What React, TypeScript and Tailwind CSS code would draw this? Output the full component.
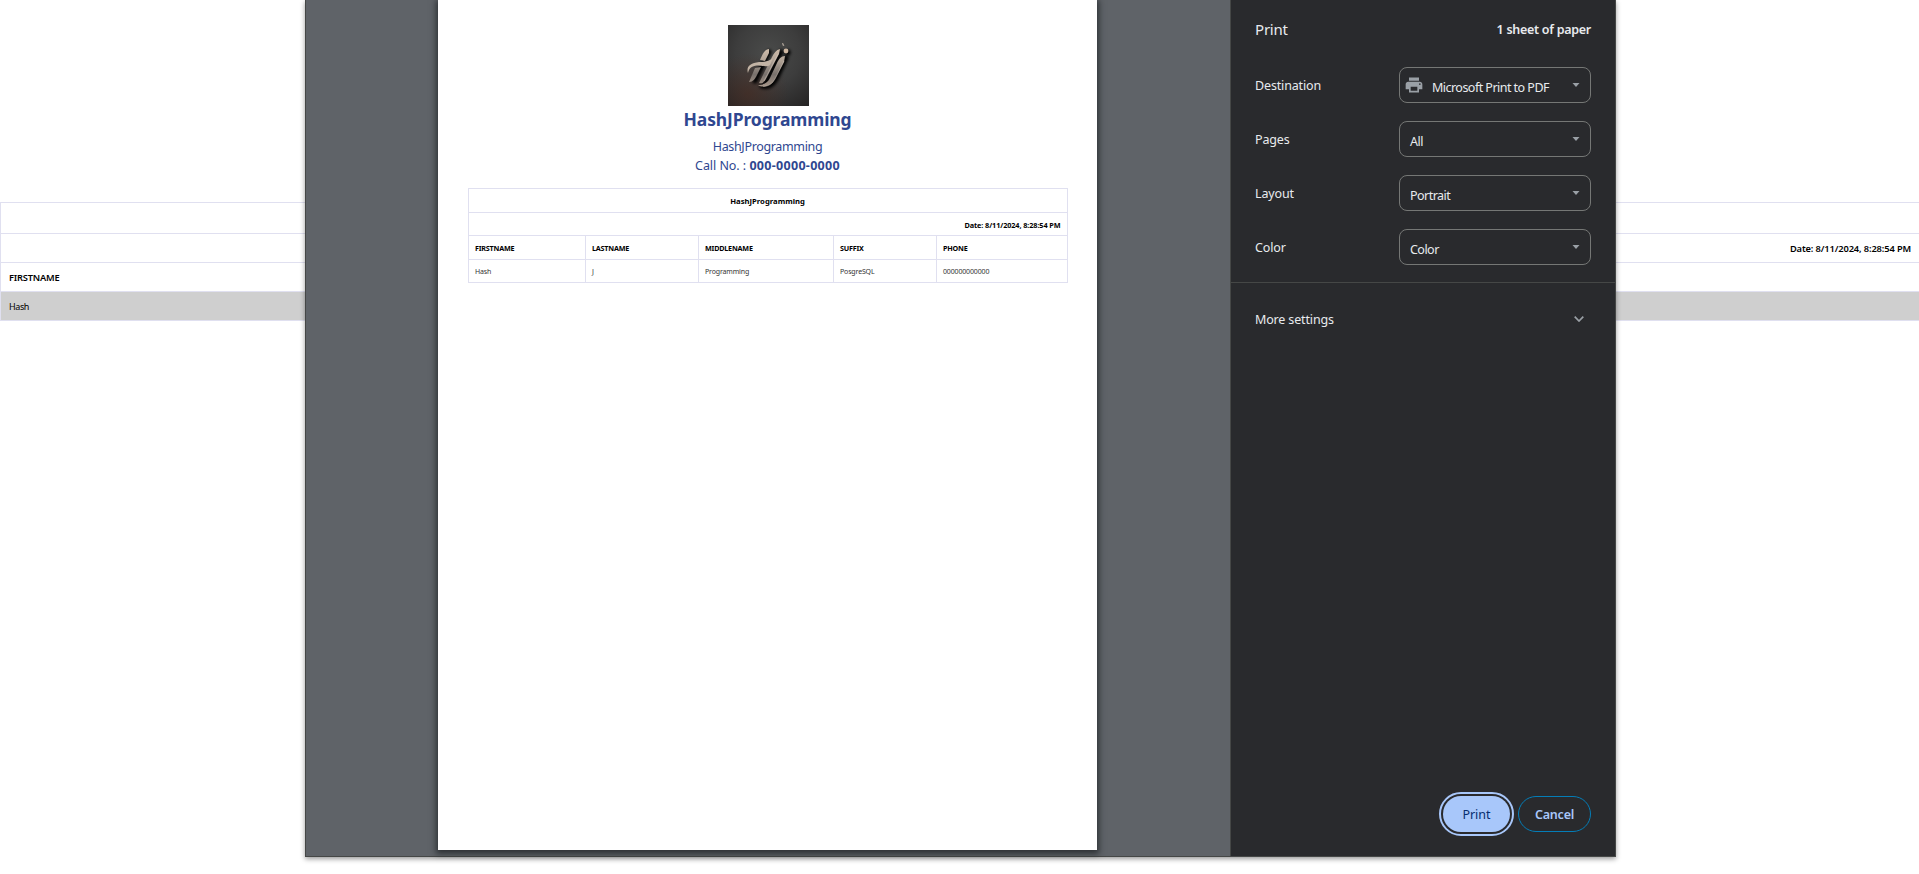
import React from "react";

const COLS = [
  { w: "w-[117px]", head: "FIRSTNAME", cell: "Hash" },
  { w: "w-[113px]", head: "LASTNAME", cell: "J" },
  { w: "w-[135px]", head: "MIDDLENAME", cell: "Programming" },
  { w: "w-[103px]", head: "SUFFIX", cell: "PosgreSQL" },
  { w: "w-[131px]", head: "PHONE", cell: "000000000000" },
];

function Logo() {
  return (
    <svg width="81" height="81" viewBox="0 0 81 81" className="ml-[2px] block">
      <defs>
        <radialGradient id="bg" cx="0.5" cy="0.35" r="0.8">
          <stop offset="0" stopColor="#4a4b4a" />
          <stop offset="0.5" stopColor="#3d3d3d" />
          <stop offset="1" stopColor="#262525" />
        </radialGradient>
        <radialGradient id="warm" cx="0.25" cy="0.85" r="0.5">
          <stop offset="0" stopColor="#4a2c22" stopOpacity="0.6" />
          <stop offset="1" stopColor="#4a2c22" stopOpacity="0" />
        </radialGradient>
        <linearGradient id="metal" x1="0" y1="20" x2="0" y2="62" gradientUnits="userSpaceOnUse">
          <stop offset="0" stopColor="#d8c5b1" />
          <stop offset="0.35" stopColor="#b3a598" />
          <stop offset="0.7" stopColor="#77706b" />
          <stop offset="1" stopColor="#a8978a" />
        </linearGradient>
        <filter id="soft" x="-30%" y="-30%" width="160%" height="160%">
          <feGaussianBlur stdDeviation="1.5" />
        </filter>
      </defs>
      <rect width="81" height="81" fill="url(#bg)" />
      <rect width="81" height="81" fill="url(#warm)" />
      <g filter="url(#soft)" fill="none" stroke="#060505" strokeWidth="5" strokeLinecap="round">
        <path d="M41 27L27 56M53 27L38 57M58 33L48 54Q43 63 34 61M60 27L60 28" />
      </g>
      <g fill="url(#metal)">
        <path d="M41 24C37 24 35 28 32 35L37 36L41 28Z" />
        <path d="M27 43L21 57C25 57 27 54 29 50L33 42Z" />
        <path d="M52 24C48 25 46 28 44 32L31 58C35 59 37 56 39 52L51 29Z" />
        <path d="M57 31C53 31 51 34 49 38L42 53C40 57 37 60 30 60C34 63 43 62 47 54L56 37Z" />
      </g>
      <path d="M20 48C18 42 22 38 31 37C37 37 42 36 45 33L42 40C38 43 34 40 29 40.5C24 41 21 43 20 48Z" fill="#c3b4a5" />
      <path d="M50 29L36 56M56 36L47 54Q43 61.5 35 61.5" stroke="#e2d7cb" strokeWidth="0.6" fill="none" opacity="0.7" />
      <circle cx="58" cy="26" r="2.4" fill="#cfb8a2" />
      <path d="M54.5 18L56 20.5L55 20.5Z" stroke="#a59a90" strokeWidth="0.8" fill="#a59a90" />
    </svg>
  );
}

function Select({ value, icon }: { value: string; icon?: boolean }) {
  return (
    <div className="flex h-9 w-48 items-center rounded-lg border border-[#757775] pr-[10px] pl-[10px]">
      {icon && (
        <svg width="20" height="20" viewBox="0 0 24 24" fill="#9aa0a6" className="-mt-px mr-[8px] -ml-[6px]">
          <path d="M19 8H5c-1.66 0-3 1.34-3 3v6h4v4h12v-4h4v-6c0-1.66-1.34-3-3-3zm-3 11H8v-5h8v5zm3-7c-.55 0-1-.45-1-1s.45-1 1-1 1 .45 1 1-.45 1-1 1zm-1-9H6v4h12V3z" />
        </svg>
      )}
      <span className="mt-[6px] flex-1 text-[12.5px] tracking-[-0.53px] whitespace-nowrap">{value}</span>
      <svg width="8" height="4" viewBox="0 0 8 4" className="-mt-px">
        <path d="M0.5 0H7.5L4 4Z" fill="#9aa0a6" />
      </svg>
    </div>
  );
}

function Setting({ label, value, icon }: { label: string; value: string; icon?: boolean }) {
  return (
    <div className="flex h-[54px] items-center justify-between pr-[24px] pl-6">
      <span className="pt-[2px] text-[12.5px] tracking-[-0.15px]">{label}</span>
      <Select value={value} icon={icon} />
    </div>
  );
}

export default function App() {
  return (
    <div className="relative h-[874px] w-[1919px] overflow-hidden bg-white font-['Noto_Sans','Open_Sans',sans-serif] text-black">
      <div className="pt-[202px]">
        <div className="border-t border-l border-[#e0e0f0]">
          <div className="h-[31px] border-b border-[#e0e0f0]" />
          <div className="flex h-[29px] items-center justify-end border-b border-[#e0e0f0] pt-[2px] pr-2 text-[9.3px] font-semibold">
            <span className="tracking-[-0.13px]">Date: 8/11/2024, 8:28:54 PM</span>
          </div>
          <div className="flex h-[29px] items-center border-b border-[#e0e0f0] pt-[2px] pl-2 text-[9.3px] font-semibold">
            <span className="tracking-[-0.2px]">FIRSTNAME</span>
          </div>
          <div className="flex h-[29px] items-center border-b border-[#e0e0f0] bg-[#cfcfcf] pt-[2px] pl-2 text-[9px]">
            <span className="tracking-[-0.4px]">Hash</span>
          </div>
        </div>
      </div>

      <div className="absolute top-0 left-[305px] flex h-[857px] w-[1311px] border-x border-b border-[#454746] bg-[#5f6368] shadow-[0_2px_5px_rgba(0,0,0,0.4)]">
        <div className="flex flex-1 pl-[132px]">
          <div className="flex h-[850px] w-[659px] flex-col items-center bg-white pt-[25px] shadow-[0_2px_6px_2px_rgba(30,33,36,0.75)]">
            <Logo />
            <div className="mt-px h-[24px] text-[17.5px] leading-[24px] font-bold tracking-[-0.13px] text-[#2f4790]">HashJProgramming</div>
            <div className="mt-[6px] h-[19px] text-[12.5px] leading-[19px] tracking-[-0.35px] text-[#2f4790]">HashJProgramming</div>
            <div className="h-[19px] text-[12.5px] leading-[19px] tracking-[-0.05px] text-[#2f4790]">
              Call No. : <span className="font-bold tracking-[0.3px]">000-0000-0000</span>
            </div>
            <div className="mt-[13px] w-[600px] border-t border-l border-[#e0e0f0] text-[7px]">
              <div className="flex h-6 items-center justify-center border-r border-b border-[#e0e0f0] pt-[3px] text-[7.7px] font-bold">HashJProgramming</div>
              <div className="flex h-[23px] items-center justify-end border-r border-b border-[#e0e0f0] pt-[2px] pr-[6px] text-[7.3px] font-bold tracking-[-0.1px]">
                Date: 8/11/2024, 8:28:54 PM
              </div>
              <div className="flex">
                {COLS.map((c) => (
                  <div key={c.head} className={`${c.w} border-r border-[#e0e0f0]`}>
                    <div className="flex h-6 items-center border-b border-[#e0e0f0] pt-px pl-[6.5px] text-[7.2px] font-bold tracking-[-0.2px]">{c.head}</div>
                    <div className="flex h-[23px] items-center border-b border-[#e0e0f0] pt-[3px] pl-[6.5px] tracking-[-0.15px] text-[#333]">{c.cell}</div>
                  </div>
                ))}
              </div>
            </div>
          </div>
        </div>

        <div className="flex w-[385px] flex-col border-l border-[#454746] bg-[#292a2d] text-[#e8eaed]">
          <div className="flex h-[58px] items-center justify-between pr-6 pl-6">
            <span className="text-[15px] tracking-[-0.2px]">Print</span>
            <span className="pt-[2px] text-[12.5px] font-semibold tracking-[-0.27px]">1 sheet of paper</span>
          </div>
          <Setting label="Destination" value="Microsoft Print to PDF" icon />
          <Setting label="Pages" value="All" />
          <Setting label="Layout" value="Portrait" />
          <Setting label="Color" value="Color" />
          <div className="mt-[8px] flex h-[73px] items-center justify-between border-t border-[#454746] pr-[31px] pl-6">
            <span className="pt-[2px] text-[12.5px] tracking-[-0.15px]">More settings</span>
            <svg width="10" height="6" viewBox="0 0 10 6" fill="none" stroke="#9aa0a6" strokeWidth="1.7">
              <path d="M0.7 0.7L5 5L9.3 0.7" />
            </svg>
          </div>
          <div className="mt-auto flex justify-end gap-[8px] pr-6 pb-[24px] text-[12.5px]">
            <button className="h-9 w-[67px] rounded-full bg-[#a8c7fa] pt-[2px] text-[#062e6f] outline-2 outline-offset-2 outline-[#a8c7fa]">Print</button>
            <button className="h-9 w-[73px] rounded-full border border-[#047db7] pt-[2px] font-semibold tracking-[-0.2px] text-[#a8c7fa]">Cancel</button>
          </div>
        </div>
      </div>
    </div>
  );
}
